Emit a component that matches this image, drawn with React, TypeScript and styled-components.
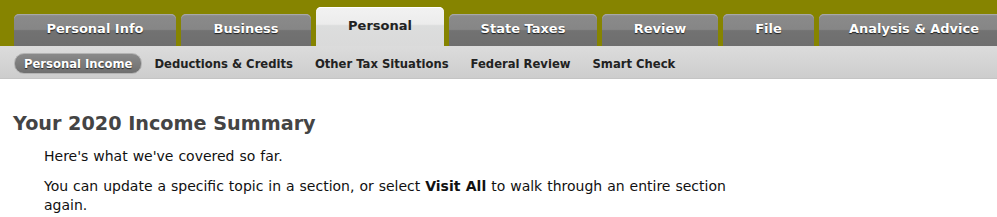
import styled, { createGlobalStyle } from 'styled-components'

const GlobalStyle = createGlobalStyle`
  body {
    margin: 0;
    background: #ffffff;
    font-family: "DejaVu Sans", Verdana, sans-serif;
  }
`

const Page = styled.div`
  width: 997px;
  overflow: hidden;
`

const TabBar = styled.div`
  display: flex;
  align-items: flex-end;
  gap: 5px;
  height: 46px;
  padding-left: 14px;
  background: #868400;
  white-space: nowrap;
`

const Tab = styled.div<{ $width: number; $active?: boolean }>`
  flex: 0 0 ${(p) => p.$width}px;
  height: ${(p) => (p.$active ? 39 : 32)}px;
  display: flex;
  align-items: center;
  justify-content: center;
  box-sizing: border-box;
  padding-bottom: ${(p) => (p.$active ? 3 : 3)}px;
  border-radius: 5px 5px 0 0;
  font-size: 13px;
  font-weight: bold;
  color: ${(p) => (p.$active ? '#222222' : '#ffffff')};
  text-shadow: ${(p) => (p.$active ? 'none' : '0 1px 1px rgba(0, 0, 0, 0.75)')};
  background: ${(p) =>
    p.$active
      ? 'linear-gradient(#f2f2f2 0%, #ececec 44%, #dcdddd 48%, #dadada 100%)'
      : 'linear-gradient(#979797 0%, #8a8a8a 8%, #868686 48%, #727272 52%, #6e6e6e 100%)'};
  box-shadow: ${(p) => (p.$active ? 'inset 0 1px 0 #ffffff' : 'inset 0 1px 0 #a8a8a8')};
`

const SubNav = styled.div`
  display: flex;
  align-items: center;
  gap: 22px;
  height: 33px;
  padding: 3px 0 0 14px;
  box-sizing: border-box;
  background: linear-gradient(#dcdcdc, #cdcdcd);
  border-bottom: 1px solid #c4c4c4;
  white-space: nowrap;
`

const SubItem = styled.div<{ $active?: boolean }>`
  display: flex;
  align-items: center;
  height: 19px;
  padding: 0 ${(p) => (p.$active ? 9 : 0)}px;
  margin-right: ${(p) => (p.$active ? -10 : 0)}px;
  border-radius: 10px;
  font-size: 11.6px;
  font-weight: bold;
  color: ${(p) => (p.$active ? '#ffffff' : '#222222')};
  text-shadow: ${(p) => (p.$active ? '0 1px 1px rgba(0, 0, 0, 0.7)' : 'none')};
  background: ${(p) => (p.$active ? 'linear-gradient(#8a8a8a, #6f6f6f)' : 'transparent')};
  border: ${(p) => (p.$active ? '1px solid #b4b4b4' : 'none')};
`

const Content = styled.div`
  padding: 33px 0 0 13px;
`

const Heading = styled.h1`
  margin: 0 0 11px;
  font-size: 19.2px;
  font-weight: bold;
  color: #444444;
  line-height: 24px;
`

const Body = styled.div`
  padding-left: 31px;
  width: 712px;
`

const Para = styled.p`
  margin: 0 0 11px;
  font-size: 14px;
  line-height: 19px;
  word-spacing: 0.5px;
  color: #111111;
`

const Strong = styled.strong`
  font-weight: bold;
`

const tabs = [
  { label: 'Personal Info', width: 162 },
  { label: 'Business', width: 130 },
  { label: 'Personal', width: 128, active: true },
  { label: 'State Taxes', width: 148 },
  { label: 'Review', width: 116 },
  { label: 'File', width: 91 },
  { label: 'Analysis & Advice', width: 190 },
]

const subItems = [
  'Personal Income',
  'Deductions & Credits',
  'Other Tax Situations',
  'Federal Review',
  'Smart Check',
]

export default function App() {
  return (
    <Page>
      <GlobalStyle />
      <TabBar>
        {tabs.map((t) => (
          <Tab key={t.label} $width={t.width} $active={t.active}>
            {t.label}
          </Tab>
        ))}
      </TabBar>
      <SubNav>
        {subItems.map((s, i) => (
          <SubItem key={s} $active={i === 0}>
            {s}
          </SubItem>
        ))}
      </SubNav>
      <Content>
        <Heading>Your 2020 Income Summary</Heading>
        <Body>
          <Para>Here's what we've covered so far.</Para>
          <Para>
            You can update a specific topic in a section, or select <Strong>Visit All</Strong> to
            walk through an entire section again.
          </Para>
        </Body>
      </Content>
    </Page>
  )
}
